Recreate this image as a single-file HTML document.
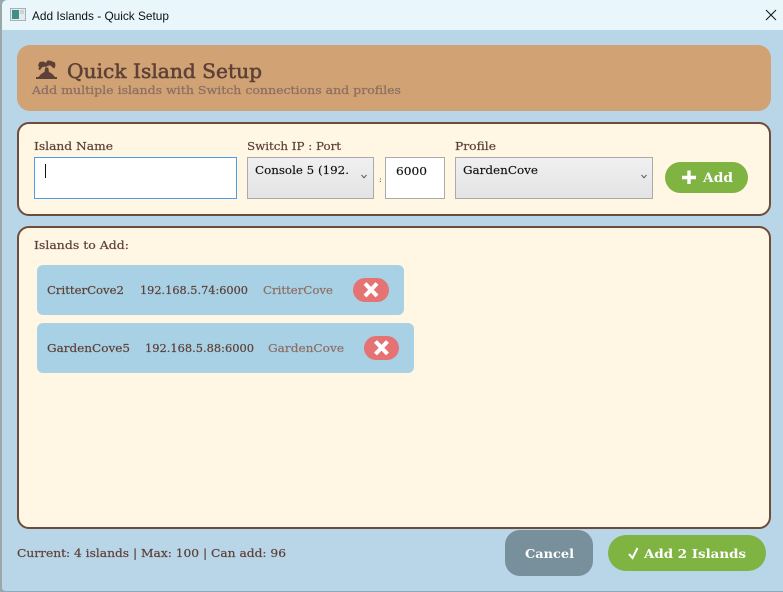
<!DOCTYPE html>
<html><head><meta charset="utf-8"><title>Add Islands - Quick Setup</title>
<style>
html,body{margin:0;padding:0;width:783px;height:592px;overflow:hidden;background:#b8d6e8}
svg{display:block}
.s{font-family:"DejaVu Serif","Liberation Serif",serif}
</style></head><body>
<svg width="783" height="592" viewBox="0 0 783 592" xmlns="http://www.w3.org/2000/svg">
<defs><linearGradient id="g" x1="0" y1="0" x2="0" y2="1"><stop offset="0" stop-color="#f0f0f0"/><stop offset="1" stop-color="#e3e3e3"/></linearGradient></defs>
<rect width="783" height="592" fill="#8fa9b5"/>
<rect x="0" y="0" width="2" height="592" fill="#9aa9a8"/>
<path d="M8 0H783V591H6Q2 591 2 587V6Q2 0 8 0Z" fill="#b8d6e8"/>
<path d="M8 0H783V30H2V6Q2 0 8 0Z" fill="#e9f6fc"/>
<rect x="10.500" y="8.500" width="15" height="12" fill="#e6eaec" stroke="#a9b1b5"/>
<rect x="12" y="10" width="7" height="9" fill="#3f8f86"/>
<rect x="20" y="10" width="4" height="4" fill="#c9d4d8"/>
<text x="32" y="20" font-family="Liberation Sans,sans-serif" font-size="12" fill="#111" textLength="137" lengthAdjust="spacingAndGlyphs">Add Islands - Quick Setup</text>
<path d="M766 10l10 10M776 10l-10 10" stroke="#1a1a1a" stroke-width="1.100" fill="none"/>

<rect x="17" y="45" width="754" height="66" rx="13" fill="#d1a274"/>
<path d="M36 79h21v-2h-2q-3-4-6-5l-.8-4.500h-3l-.7 4.500q-3 1-6 5h-2.500zM46 67q-2-1-4 .5l-2 2.500-1.500-.5 .5-3-1-1 1.500-3.500 3-.5q2 0 3.500 1.500 1-3 3-2.500 1.500 0 3.500 1l2.500 1 .5 3-1 3-2-1-2-2q-2-.5-4.500 1.500z" fill="#5d4037"/>
<g class="s">
<text x="67" y="78" font-size="20" fill="#5d4037" stroke="#5d4037" stroke-width=".55" textLength="195" lengthAdjust="spacingAndGlyphs">Quick Island Setup</text>
<text x="32" y="94" font-size="11" fill="#8d6e63" stroke="#8d6e63" stroke-width=".25" textLength="369" lengthAdjust="spacingAndGlyphs">Add multiple islands with Switch connections and profiles</text>
</g>

<rect x="18" y="123" width="752" height="92" rx="11" fill="#fff6e3" stroke="#6d4c3b" stroke-width="2"/>
<g class="s" font-size="11" fill="#5d4037" stroke="#5d4037" stroke-width=".2">
<text x="34" y="150" textLength="79" lengthAdjust="spacingAndGlyphs">Island Name</text>
<text x="247" y="150" textLength="94" lengthAdjust="spacingAndGlyphs">Switch IP : Port</text>
<text x="455" y="150" textLength="41" lengthAdjust="spacingAndGlyphs">Profile</text>
</g>
<rect x="34.500" y="157.500" width="202" height="41" fill="#fff" stroke="#4f9be6"/>
<rect x="45" y="164" width="1" height="14" fill="#111"/>
<rect x="247.500" y="157.500" width="126" height="41" fill="url(#g)" stroke="#aaa"/>
<text class="s" x="255" y="174" font-size="11" fill="#111" stroke="#111" stroke-width=".15" textLength="94" lengthAdjust="spacingAndGlyphs">Console 5 (192.</text>
<path d="M361.500 175l2.500 2.800 2.500-2.800" fill="none" stroke="#555" stroke-width="1"/>
<text class="s" x="379" y="182" font-size="8" fill="#5d4037">:</text>
<rect x="385.500" y="157.500" width="59" height="41" fill="#fff" stroke="#aaa"/>
<text class="s" x="396" y="175" font-size="11" fill="#111" stroke="#111" stroke-width=".15" textLength="31" lengthAdjust="spacingAndGlyphs">6000</text>
<rect x="455.500" y="157.500" width="197" height="41" fill="url(#g)" stroke="#aaa"/>
<text class="s" x="463" y="174" font-size="11" fill="#111" stroke="#111" stroke-width=".15" textLength="75" lengthAdjust="spacingAndGlyphs">GardenCove</text>
<path d="M641.500 175l2.500 2.800 2.500-2.800" fill="none" stroke="#555" stroke-width="1"/>
<rect x="665" y="162" width="83" height="31" rx="15.500" fill="#7fb342"/>
<path d="M689 170.500v13.500M682 177.500h14" stroke="#fff" stroke-width="3.400" fill="none"/>
<text class="s" x="703" y="182" font-size="13" font-weight="bold" fill="#fff" textLength="30" lengthAdjust="spacingAndGlyphs">Add</text>

<rect x="18" y="227" width="752" height="301" rx="11" fill="#fff6e3" stroke="#6d4c3b" stroke-width="2"/>
<text class="s" x="34" y="249" font-size="11" fill="#5d4037" stroke="#5d4037" stroke-width=".2" textLength="95" lengthAdjust="spacingAndGlyphs">Islands to Add:</text>

<rect x="37" y="265" width="367" height="50" rx="6" fill="#a8d1e5"/>
<g class="s" font-size="11">
<text x="47" y="294" fill="#5d4037" stroke="#5d4037" stroke-width=".2" textLength="77" lengthAdjust="spacingAndGlyphs">CritterCove2</text>
<text x="140" y="294" fill="#5d4037" stroke="#5d4037" stroke-width=".2" textLength="108" lengthAdjust="spacingAndGlyphs">192.168.5.74:6000</text>
<text x="263" y="294" fill="#8d6e63" stroke="#8d6e63" stroke-width=".2" textLength="70" lengthAdjust="spacingAndGlyphs">CritterCove</text>
</g>
<rect x="353" y="278" width="36" height="24" rx="12" fill="#e57373"/>
<path d="M365 283.500l12 12.500M377 283.500l-12 12.500" stroke="#fff" stroke-width="4" fill="none"/>

<rect x="37" y="323" width="377" height="50" rx="6" fill="#a8d1e5"/>
<g class="s" font-size="11">
<text x="47" y="352" fill="#5d4037" stroke="#5d4037" stroke-width=".2" textLength="83" lengthAdjust="spacingAndGlyphs">GardenCove5</text>
<text x="145" y="352" fill="#5d4037" stroke="#5d4037" stroke-width=".2" textLength="109" lengthAdjust="spacingAndGlyphs">192.168.5.88:6000</text>
<text x="268" y="352" fill="#8d6e63" stroke="#8d6e63" stroke-width=".2" textLength="76" lengthAdjust="spacingAndGlyphs">GardenCove</text>
</g>
<rect x="364" y="336" width="35" height="24" rx="12" fill="#e57373"/>
<path d="M375.500 341.500l12 12.500M387.500 341.500l-12 12.500" stroke="#fff" stroke-width="4" fill="none"/>

<text class="s" x="17" y="557" font-size="11" fill="#5d4037" stroke="#5d4037" stroke-width=".2" textLength="269" lengthAdjust="spacingAndGlyphs">Current: 4 islands | Max: 100 | Can add: 96</text>
<rect x="505" y="530" width="88" height="46" rx="15" fill="#78909c"/>
<text class="s" x="525" y="558" font-size="12" font-weight="bold" fill="#fff" textLength="49" lengthAdjust="spacingAndGlyphs">Cancel</text>
<rect x="608" y="535" width="158" height="36" rx="18" fill="#7fb342"/>
<path d="M629 554l3.500 4 5-10" fill="none" stroke="#fff" stroke-width="2"/>
<text class="s" x="644" y="558" font-size="12" font-weight="bold" fill="#fff" textLength="102" lengthAdjust="spacingAndGlyphs">Add 2 Islands</text>
</svg>
</body></html>
